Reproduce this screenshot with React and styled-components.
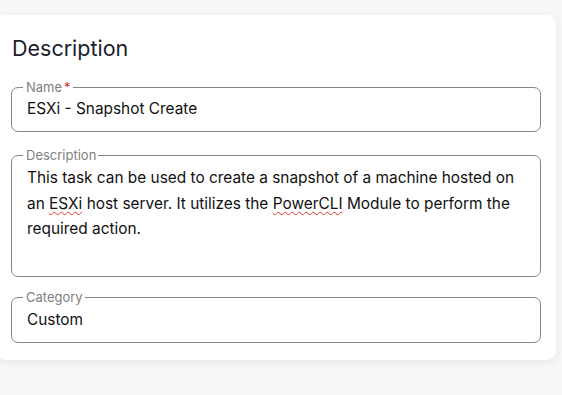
import React from 'react';
import styled, { createGlobalStyle } from 'styled-components';

const GlobalStyle = createGlobalStyle`
  html, body {
    margin: 0;
    padding: 0;
    background: #f7f7f7;
    font-family: Inter, "Noto Sans", sans-serif;
    overflow: hidden;
  }
`;

const Page = styled.div`
  width: 562px;
  height: 395px;
  padding-top: 15px;
  box-sizing: border-box;
`;

const Card = styled.section`
  margin-left: -4px;
  width: 560px;
  box-sizing: border-box;
  padding: 21px 15px 17px;
  background: #fff;
  border-radius: 9px;
  box-shadow: 0 2px 10px rgba(0, 0, 0, 0.07);
  display: flex;
  flex-direction: column;
`;

const Title = styled.h2`
  margin: 0 0 18px 1px;
  font-size: 21.5px;
  line-height: 25px;
  font-weight: 400;
  color: #1b1d2c;
`;

const Field = styled.fieldset`
  margin: ${p => p.$mt || 0}px 0 0;
  padding: ${p => p.$pt ?? 4}px 14px ${p => p.$pb ?? 12}px 15px;
  border: 1px solid #858585;
  border-radius: 7px;
  min-width: 0;
`;

const Legend = styled.legend`
  margin-left: -4px;
  padding: 0 2px 0 3px;
  font-size: 13px;
  line-height: 16px;
  color: #808080;
`;

const Required = styled.span`
  color: #d32f2f;
  margin-left: 2px;
`;

const Value = styled.div`
  font-size: 15.4px;
  line-height: 20px;
  color: #111;
`;

const Area = styled.div`
  font-size: 15.4px;
  line-height: 25.5px;
  color: #111;
  min-height: 102px;
`;

const Misspelled = styled.span`
  text-decoration: underline wavy #e0342c;
  text-decoration-thickness: 1px;
  text-underline-offset: 2px;
`;

export default function App() {
  return (
    <>
      <GlobalStyle />
      <Page>
        <Card>
          <Title>Description</Title>
          <Field>
            <Legend>
              Name<Required>*</Required>
            </Legend>
            <Value>ESXi - Snapshot Create</Value>
          </Field>
          <Field $mt={15} $pt={2} $pb={9}>
            <Legend>Description</Legend>
            <Area>
              This task can be used to create a snapshot of a machine hosted on an{' '}
              <Misspelled>ESXi</Misspelled> host server. It utilizes the{' '}
              <Misspelled>PowerCLI</Misspelled> Module to perform the required action.
            </Area>
          </Field>
          <Field $mt={12} $pt={5} $pb={12}>
            <Legend>Category</Legend>
            <Value>Custom</Value>
          </Field>
        </Card>
      </Page>
    </>
  );
}
